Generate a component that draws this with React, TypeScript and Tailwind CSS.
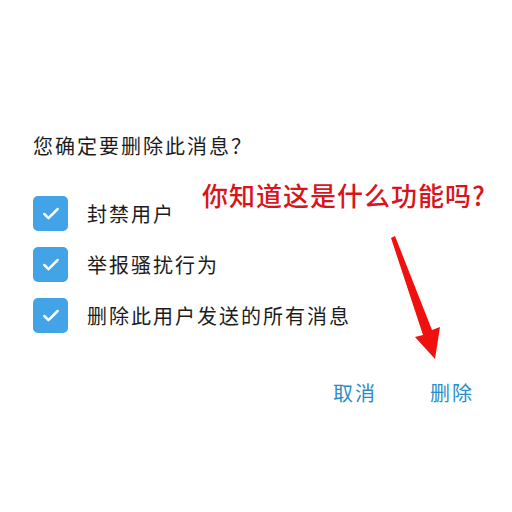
import { Check } from 'lucide-react';

const options = ['封禁用户', '举报骚扰行为', '删除此用户发送的所有消息'];

function Checkbox() {
  return (
    <div className="h-[35px] w-[35px] rounded-[5px] bg-[#42a4e6] flex items-center justify-center shrink-0">
      <Check className="h-[20px] w-[20px] text-white" strokeWidth={3} />
    </div>
  );
}

export default function App() {
  return (
    <div className="relative w-[512px] h-[512px] overflow-hidden bg-white font-['Noto_Sans_CJK_SC',sans-serif]">
      <div className="pt-[130px] pl-[33px]">
        {/* Dialog title */}
        <h1 className="text-[20px] leading-[32px] tracking-[2px] text-[#1c1c1c]">您确定要删除此消息？</h1>

        {/* Options */}
        <div className="mt-[34px] flex flex-col gap-[16px]">
          {options.map((label) => (
            <div key={label} className="flex items-center gap-[19px]">
              <Checkbox />
              <span className="text-[20px] leading-[32px] tracking-[2px] text-[#1c1c1c]">{label}</span>
            </div>
          ))}
        </div>

        {/* Actions */}
        <div className="mt-[44px] flex justify-end gap-[53px] pr-[38px]">
          <button className="text-[20px] leading-[32px] tracking-[2px] text-[#2a8cc8]">取消</button>
          <button className="text-[20px] leading-[32px] tracking-[2px] text-[#2a8cc8]">删除</button>
        </div>
      </div>

      {/* Red annotation */}
      <div className="absolute left-[202px] top-[179px] text-[26px] leading-[32px] tracking-[1px] font-medium text-[#d9141a]">
        你知道这是什么功能吗?
      </div>
      <svg className="absolute left-0 top-0" width="512" height="512" viewBox="0 0 512 512">
        <polygon points="391,238 395,236 432,330 440,327 435,359 415,337 423,335" fill="#f01010" />
      </svg>
    </div>
  );
}
